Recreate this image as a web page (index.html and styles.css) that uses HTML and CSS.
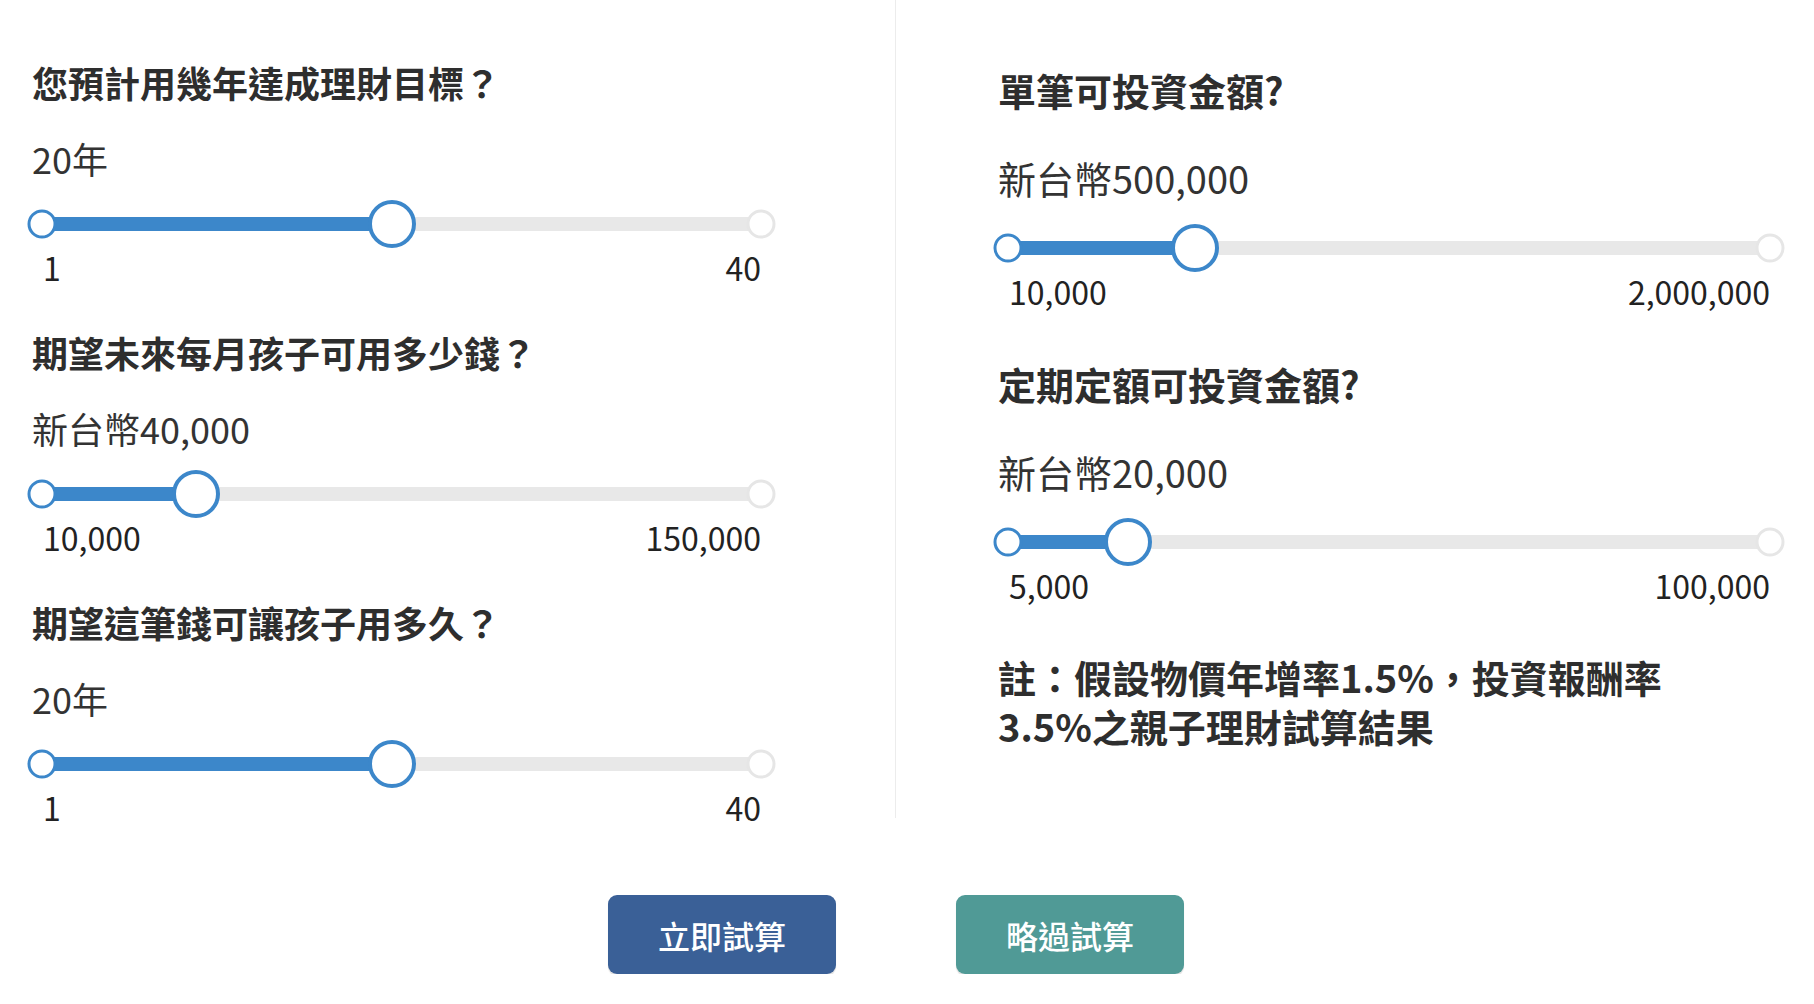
FILE: index.html
```html
<!DOCTYPE html>
<html lang="zh-Hant">
<head>
<meta charset="utf-8">
<title>親子理財試算</title>
<link rel="stylesheet" href="styles.css">
</head>
<body>
<div class="page">
  <div class="cols">
    <section class="col col-left">
      <div class="q">
        <h2 class="q-title">您預計用幾年達成理財目標？</h2>
        <div class="q-value">20年</div>
        <div class="slider">
          <div class="track">
            <div class="fill" style="width:48.72%"></div>
            <span class="knob knob-start"></span>
            <span class="knob knob-end"></span>
            <span class="thumb" style="left:48.72%"></span>
          </div>
        </div>
        <div class="range-labels"><span>1</span><span>40</span></div>
      </div>
      <div class="q">
        <h2 class="q-title">期望未來每月孩子可用多少錢？</h2>
        <div class="q-value">新台幣40,000</div>
        <div class="slider">
          <div class="track">
            <div class="fill" style="width:21.43%"></div>
            <span class="knob knob-start"></span>
            <span class="knob knob-end"></span>
            <span class="thumb" style="left:21.43%"></span>
          </div>
        </div>
        <div class="range-labels"><span>10,000</span><span>150,000</span></div>
      </div>
      <div class="q">
        <h2 class="q-title">期望這筆錢可讓孩子用多久？</h2>
        <div class="q-value">20年</div>
        <div class="slider">
          <div class="track">
            <div class="fill" style="width:48.72%"></div>
            <span class="knob knob-start"></span>
            <span class="knob knob-end"></span>
            <span class="thumb" style="left:48.72%"></span>
          </div>
        </div>
        <div class="range-labels"><span>1</span><span>40</span></div>
      </div>
    </section>
    <section class="col col-right">
      <div class="q">
        <h2 class="q-title">單筆可投資金額?</h2>
        <div class="q-value">新台幣500,000</div>
        <div class="slider">
          <div class="track">
            <div class="fill" style="width:24.62%"></div>
            <span class="knob knob-start"></span>
            <span class="knob knob-end"></span>
            <span class="thumb" style="left:24.62%"></span>
          </div>
        </div>
        <div class="range-labels"><span>10,000</span><span>2,000,000</span></div>
      </div>
      <div class="q">
        <h2 class="q-title">定期定額可投資金額?</h2>
        <div class="q-value">新台幣20,000</div>
        <div class="slider">
          <div class="track">
            <div class="fill" style="width:15.79%"></div>
            <span class="knob knob-start"></span>
            <span class="knob knob-end"></span>
            <span class="thumb" style="left:15.79%"></span>
          </div>
        </div>
        <div class="range-labels"><span>5,000</span><span>100,000</span></div>
      </div>
      <p class="note">註：假設物價年增率1.5%，投資報酬率3.5%之親子理財試算結果</p>
    </section>
  </div>
  <div class="actions">
    <button class="btn btn-primary" type="button">立即試算</button>
    <button class="btn btn-secondary" type="button">略過試算</button>
  </div>
</div>
</body>
</html>
```

FILE: styles.css
```css
html, body {
  margin: 0;
  padding: 0;
  background: #ffffff;
}

body {
  font-family: "Noto Sans CJK TC", "Noto Sans CJK SC", "Noto Sans", sans-serif;
  color: #333333;
}

.page {
  width: 1814px;
}

.cols {
  display: flex;
  height: 818px;
}

.col {
  box-sizing: border-box;
}

.col-left {
  width: 896px;
  border-right: 1px solid #ececec;
  padding: 57px 120px 0 32px;
}

.col-right {
  flex: 1;
  padding: 64px 30px 0 102px;
}

.q-title {
  margin: 0;
  font-weight: 700;
  color: #2e2e2e;
}

.q-value {
  font-weight: 400;
  color: #333333;
}

.slider {
  height: 48px;
  margin-left: -5px;
  padding: 0 14.5px;
  position: relative;
}

.track {
  position: relative;
  top: 17px;
  height: 14px;
  background: #e8e8e8;
}

.fill {
  height: 100%;
  background: #3c87ca;
}

.knob,
.thumb {
  position: absolute;
  top: 50%;
  box-sizing: border-box;
  border-radius: 50%;
  background: #ffffff;
  transform: translate(-50%, -50%);
}

.knob {
  width: 29px;
  height: 29px;
  border: 3px solid #3c87ca;
}

.knob-start {
  left: 0;
}

.knob-end {
  left: 100%;
  border-color: #e6e6e6;
}

.thumb {
  width: 48px;
  height: 48px;
  border: 4px solid #3c87ca;
}

.range-labels {
  display: flex;
  justify-content: space-between;
  margin: -1px 14px 0 0;
  padding: 0 0 0 11px;
  font-size: 32px;
  line-height: 40px;
  color: #222222;
}

/* left column sizes */
.col-left .q + .q {
  margin-top: 40px;
}

.col-left .q-title {
  font-size: 36px;
  line-height: 50px;
}

.col-left .q-value {
  margin-top: 26px;
  font-size: 36px;
  line-height: 50px;
}

.col-left .slider {
  margin-top: 17px;
}

/* right column sizes */
.col-right .q + .q {
  margin-top: 47px;
}

.col-right .q-title {
  font-size: 38px;
  line-height: 52px;
}

.col-right .q-value {
  margin-top: 36px;
  font-size: 38px;
  line-height: 52px;
}

.col-right .slider {
  margin-top: 20px;
}

.note {
  margin: 47px 0 0 0;
  max-width: 700px;
  font-size: 38px;
  line-height: 49px;
  font-weight: 700;
  color: #2e2e2e;
}

.actions {
  display: flex;
  justify-content: center;
  gap: 120px;
  margin-top: 77px;
  padding-right: 22px;
}

.btn {
  width: 228px;
  height: 79px;
  border: none;
  border-radius: 9px;
  font-family: "Noto Sans CJK TC", "Noto Sans CJK SC", sans-serif;
  font-size: 32px;
  font-weight: 500;
  color: #ffffff;
  cursor: pointer;
  box-shadow: 0 2px 1px rgba(0, 0, 0, 0.12);
}

.btn-primary {
  background: #3a6097;
}

.btn-secondary {
  background: #509a96;
}
```
